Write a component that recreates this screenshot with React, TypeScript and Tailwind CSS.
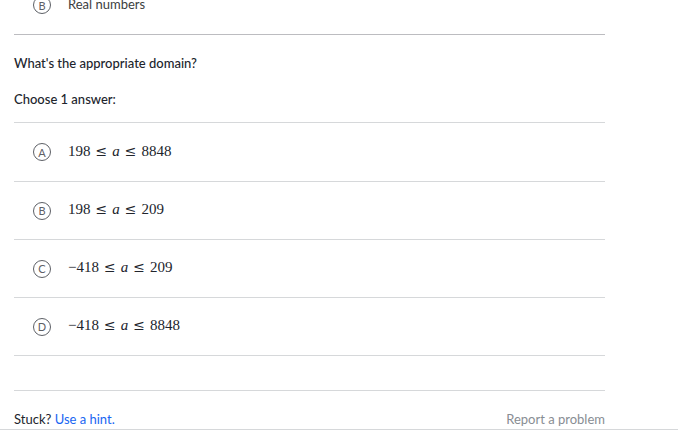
import React from 'react';

const choices = [
  { letter: 'A', lo: '198', hi: '8848', h: 'h-[59px]' },
  { letter: 'B', lo: '198', hi: '209', h: 'h-[58px]' },
  { letter: 'C', lo: '−418', hi: '209', h: 'h-[58px]' },
  { letter: 'D', lo: '−418', hi: '8848', h: 'h-[58px]' },
];

function Letter({ letter }: { letter: string }) {
  return (
    <div className="w-[18px] h-[18px] rounded-full border-[1.5px] border-[#5d6066] flex items-center justify-center text-[11px] leading-none text-[#5d6066] flex-shrink-0">
      {letter}
    </div>
  );
}

function Inequality({ lo, hi }: { lo: string; hi: string }) {
  return (
    <span className="relative -top-[1px] text-[15px] text-[#21242c]" style={{ fontFamily: '"Liberation Serif", serif' }}>
      {lo}
      <span className="mx-[5px] text-[14px]" style={{ fontFamily: '"DejaVu Serif", serif' }}>≤</span>
      <i>a</i>
      <span className="mx-[5px] text-[14px]" style={{ fontFamily: '"DejaVu Serif", serif' }}>≤</span>
      {hi}
    </span>
  );
}

export default function App() {
  return (
    <div className="w-[678px] h-[436px] overflow-hidden bg-white text-[#21242c]" style={{ fontFamily: 'Lato, "Noto Sans", sans-serif' }}>
      <div className="w-[591px] ml-[14px]">
        <div className="mt-[-24px] h-[59px] flex items-center gap-[17px] pl-[19px] border-b border-[#bcbcc0]">
          <Letter letter="B" />
          <span className="text-[13px] text-[#3b3e40]">Real numbers</span>
        </div>

        <p className="mt-[19px] text-[13px] font-medium leading-[18px]">What's the appropriate domain?</p>
        <p className="mt-[18px] text-[13px] font-medium leading-[18px]">Choose 1 answer:</p>

        <div className="mt-[14px] border-t border-[#d6d8da]">
          {choices.map((c) => (
            <div key={c.letter} className={`${c.h} flex items-center gap-[17px] pl-[19px] border-b border-[#d6d8da]`}>
              <Letter letter={c.letter} />
              <Inequality lo={c.lo} hi={c.hi} />
            </div>
          ))}
        </div>

        <div className="h-[35px] border-b border-[#d6d8da]" />
      </div>

      <div className="border-b border-[#d6d8da]">
        <div className="w-[591px] ml-[14px] h-[38px] flex items-center justify-between text-[13px] pt-[20px]">
          <span>
            Stuck? <span className="text-[#1865f2]">Use a hint.</span>
          </span>
          <span className="text-[#888d93]">Report a problem</span>
        </div>
      </div>
    </div>
  );
}
